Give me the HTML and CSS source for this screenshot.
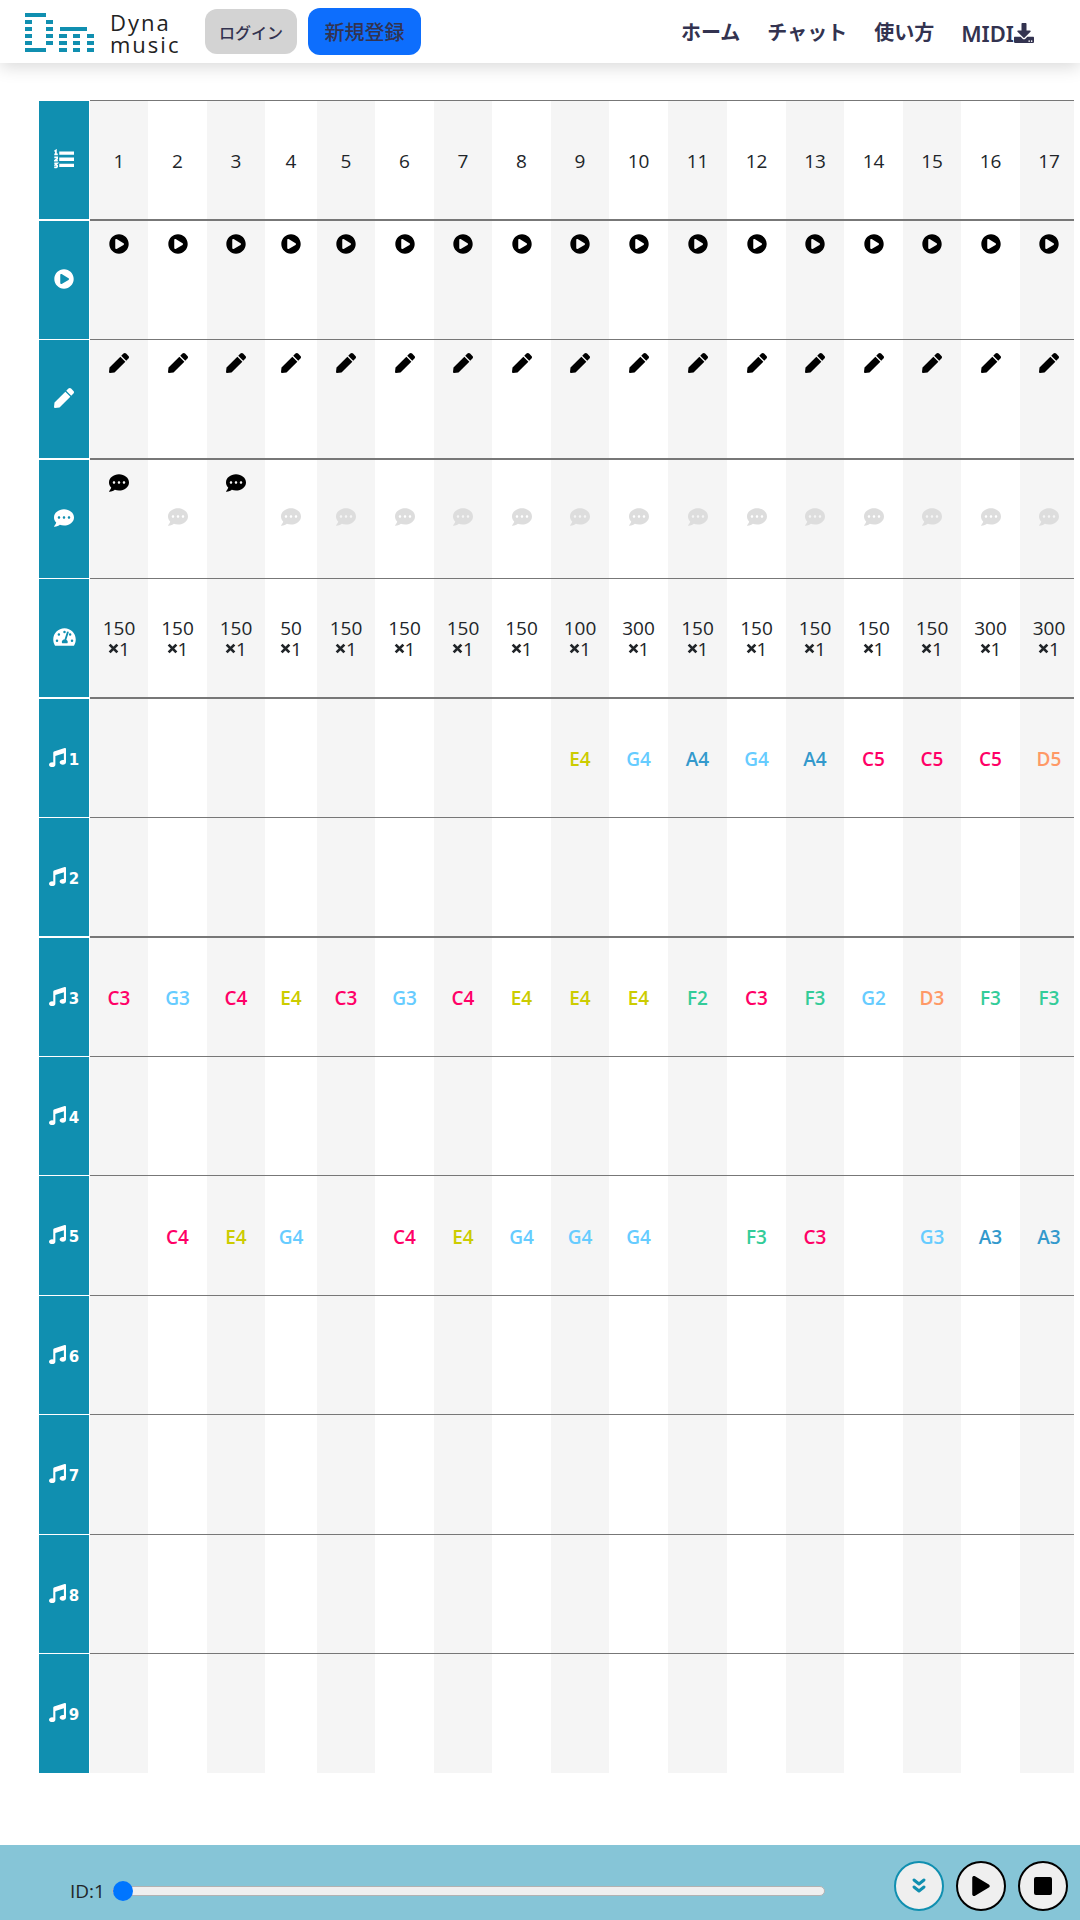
FILE: index.html
```html
<!DOCTYPE html>
<html lang="ja">
<head>
<meta charset="utf-8">
<meta name="viewport" content="width=device-width, initial-scale=1">
<title>Dynamusic</title>
<link rel="stylesheet" href="styles.css">
</head>
<body>
<svg class="sprite" aria-hidden="true">
  <symbol id="play-circle" viewBox="0 0 512 512"><path d="M256 8C119 8 8 119 8 256s111 248 248 248 248-111 248-248S393 8 256 8zm115.7 272l-176 101c-15.8 8.8-35.7-2.5-35.7-21V152c0-18.4 19.8-29.8 35.7-21l176 107c16.4 9.2 16.4 32.9 0 42z"/></symbol>
  <symbol id="pen" viewBox="0 0 512 512"><path d="M290.74 93.24l128.02 128.02-277.99 277.99-114.14 12.6C11.35 513.54-1.56 500.62.14 485.34l12.7-114.22 277.9-277.88zm207.2-19.06l-60.11-60.11c-18.75-18.75-49.16-18.75-67.91 0l-56.55 56.55 128.02 128.02 56.55-56.55c18.75-18.76 18.75-49.16 0-67.91z"/></symbol>
  <symbol id="comment" viewBox="0 0 512 512"><path d="M256 32C114.6 32 0 125.1 0 240c0 49.6 21.4 95 57 130.7C44.5 421.1 2.7 466 2.2 466.5c-2.2 2.3-2.8 5.7-1.5 8.7S4.8 480 8 480c66.3 0 116-31.8 140.6-51.4 32.7 12.3 69 19.4 107.4 19.4 141.4 0 256-93.1 256-208S397.4 32 256 32zM128 272c-17.7 0-32-14.3-32-32s14.3-32 32-32 32 14.3 32 32-14.3 32-32 32zm128 0c-17.7 0-32-14.3-32-32s14.3-32 32-32 32 14.3 32 32-14.3 32-32 32zm128 0c-17.7 0-32-14.3-32-32s14.3-32 32-32 32 14.3 32 32-14.3 32-32 32z"/></symbol>
  <symbol id="music" viewBox="0 0 512 512" preserveAspectRatio="none"><path d="M470.38 1.51L150.41 96A32 32 0 0 0 128 126.51v261.41A139 139 0 0 0 96 384c-53 0-96 28.66-96 64s43 64 96 64 96-28.66 96-64V214.32l256-75v184.61a138.4 138.4 0 0 0-32-3.93c-53 0-96 28.66-96 64s43 64 96 64 96-28.65 96-64V32a32 32 0 0 0-41.62-30.49z"/></symbol>
  <symbol id="list" viewBox="0 0 21 20"><path d="M5.500 2H21v3.500H5.500zM5.500 8.500H21V12H5.500zM5.500 15H21v3.500H5.500z"/><path d="M.500 2l1.500-1v4M.300 5.200H4M.300 8.200h3v1.500L.800 11.800H4M.300 14.500h3L1.500 16.300q2.200 0 1.800 1.500t-3 .800" fill="none" stroke="currentColor" stroke-width="1.800"/></symbol>
  <symbol id="gauge" viewBox="0 0 576 512"><path fill-rule="evenodd" d="M288 32C129 32 0 161 0 320c0 53 14 102 39 145 6 9 16 15 27 15h444c11 0 21-6 27-15 25-43 39-92 39-145C576 161 447 32 288 32zM96 384a32 32 0 1 1 0-64 32 32 0 0 1 0 64zm48-160a32 32 0 1 1 0-64 32 32 0 0 1 0 64zM288 96a32 32 0 1 1 0 64 32 32 0 0 1 0-64zm108 46l-62 185c43 27 45 66 27 89H230c-26-48 6-95 58-96l62-193c9-26 52-12 46 15zm36 82a32 32 0 1 1 0-64 32 32 0 0 1 0 64zm48 160a32 32 0 1 1 0-64 32 32 0 0 1 0 64z"/></symbol>
  <symbol id="download" viewBox="0 0 512 512"><path fill-rule="evenodd" d="M216 0h80c13 0 24 11 24 24v168h88c18 0 27 22 14 34L269 378c-7 7-19 7-26 0L90 226c-13-12-4-34 14-34h88V24c0-13 11-24 24-24zm296 376v112c0 13-11 24-24 24H24c-13 0-24-11-24-24V376c0-13 11-24 24-24h147l49 49c20 20 52 20 72 0l49-49h147c13 0 24 11 24 24zM368 464a20 20 0 1 0 40 0 20 20 0 0 0-40 0zm64 0a20 20 0 1 0 40 0 20 20 0 0 0-40 0z"/></symbol>
  <symbol id="times" viewBox="0 0 10 10"><path d="M1.500 1.500l7 7M8.500 1.500l-7 7" fill="none" stroke="currentColor" stroke-width="2.500"/></symbol>
</svg>

<header class="topbar">
  <a class="brand" href="#" aria-label="Dyna music">
    <svg class="brand-mark" viewBox="0 0 70 40" aria-hidden="true">
      <g fill="#108fb0">
        <path d="M0 0h21v4H0zM0 7h7v4H0zM0 14h7v4H0zM0 21h7v4H0zM0 28h7v4H0zM0 35h21v4H0zM21 7h7v4h-7zM21 14h7v4h-7zM21 21h7v4h-7zM21 28h7v4h-7z"/>
        <path d="M35 14h27v4H35zM34 21h8v4h-8zM34 28h8v4h-8zM34 35h8v4h-8zM48 21h7v4h-7zM48 28h7v4h-7zM48 35h7v4h-7zM62 21h7v4h-7zM62 28h7v4h-7zM62 35h7v4h-7z"/>
      </g>
    </svg>
    <span class="brand-name">Dyna<br>music</span>
  </a>
  <button class="btn btn-login" type="button">ログイン</button>
  <button class="btn btn-signup" type="button">新規登録</button>
  <nav class="menu">
    <a href="#">ホーム</a>
    <a href="#">チャット</a>
    <a href="#">使い方</a>
    <a class="menu-midi" href="#">MIDI<svg class="icon" aria-hidden="true"><use href="#download"/></svg></a>
  </nav>
</header>

<main class="score">
  <table class="grid">
    <colgroup id="columns"><col class="col-label"></colgroup>
    <tbody id="rows"></tbody>
  </table>
</main>

<footer class="player">
  <label class="position-label" for="position">ID:1</label>
  <input class="position" id="position" type="range" min="1" max="100" value="1">
  <div class="controls">
    <button class="round round-accent" type="button" aria-label="Scroll">
      <svg viewBox="0 0 16 18" width="16" height="18"><path d="M3 3l5 4 5-4M3 10l5 4 5-4" fill="none" stroke="currentColor" stroke-width="3" stroke-linecap="round" stroke-linejoin="round"/></svg>
    </button>
    <button class="round" type="button" aria-label="Play">
      <svg viewBox="0 0 448 512" width="18" height="20"><path d="M424.400 214.700L72.400 6.600C43.800-10.300 0 6.100 0 47.900V464c0 37.500 40.700 60.100 72.400 41.300l352-208c31.400-18.500 31.500-64.100 0-82.600z"/></svg>
    </button>
    <button class="round" type="button" aria-label="Stop">
      <svg viewBox="0 0 18 18" width="18" height="18"><rect width="18" height="18" rx="2"/></svg>
    </button>
  </div>
</footer>
<script src="score.js"></script>
</body>
</html>
```
FILE: styles.css
```css
* { box-sizing: border-box; }

body {
  margin: 0;
  min-height: 100vh;
  display: flex;
  flex-direction: column;
  background: #fff;
  color: #212529;
  font-family: "Open Sans", "Noto Sans CJK JP", sans-serif;
  font-size: 19px;
  line-height: 20px;
}

button { font-family: inherit; padding: 0; cursor: pointer; }

.sprite { display: none; }
.icon { width: 20px; height: 20px; fill: currentColor; }

/* Top bar */
.topbar {
  display: flex;
  align-items: center;
  height: 63px;
  padding: 0 46px 0 25px;
  background: #fff;
  box-shadow: 0 4px 16px rgba(0, 0, 0, .15);
}
.brand {
  display: flex;
  align-items: center;
  gap: 15px;
  width: 180px;
  padding-top: 2px;
  color: #222;
  text-decoration: none;
}
.brand-mark { width: 70px; height: 40px; }
.brand-name {
  font-family: "Open Sans", sans-serif;
  font-size: 22px;
  line-height: 22px;
  letter-spacing: 2px;
}
.btn {
  border: 0;
  border-radius: 12px;
  color: #333350;
  font-size: 20px;
  font-weight: 500;
}
.btn-login { width: 92px; height: 45px; background: #d3d3d3; font-size: 16px; }
.btn-signup { width: 113px; height: 47px; margin-left: 11px; background: #0d6efd; }
.menu { display: flex; gap: 27px; margin-left: auto; padding-top: 2px; }
.menu a {
  display: flex;
  align-items: center;
  color: #333350;
  font-family: "Noto Sans", "Noto Sans CJK JP", sans-serif;
  font-size: 20px;
  font-weight: 600;
  text-decoration: none;
}
.menu .menu-midi { font-size: 22px; }

/* Score grid */
.score {
  flex: 1;
  margin: 37px 6px 72px 39px;
  overflow-x: auto;
  overflow-y: hidden;
  scrollbar-width: none;
}
.grid { width: 1039px; table-layout: fixed; border-collapse: separate; border-spacing: 0; }
.col-label { width: 51px; }
.col-odd { width: 58px; }
.col-even { width: 59px; }
.col-narrow { width: 52px; }

.grid th, .grid td { padding: 0; height: 119px; text-align: center; vertical-align: middle; }
.grid tr:nth-child(even) > * { height: 120px; }
.grid td { padding-top: 2px; border-top: 1px solid #777; }
.grid td:nth-child(even) { background: #f5f5f5; }
.grid th {
  padding-bottom: 2px;
  border-top: 1px solid #fff;
  border-right: 1px solid #fff;
  background: #108fb0;
  background-clip: padding-box;
  color: #fff;
}
.grid tr.thick > * { border-top-width: 2px; }
.grid td.top { padding-top: 13px; vertical-align: top; }
.grid td.off { padding: 0 0 4px; }
.grid td .icon { display: block; margin: 0 auto; color: #000; }
.grid td.off .icon { color: #ddd; }
.grid th .icon { display: block; margin: 0 auto; }
.grid .gauge { width: 23px; }

.cell-button { display: block; margin: 0 auto; border: 0; background: none; }
.tempo { line-height: 21px; }
.grid .tempo .icon { display: inline-block; width: 11px; height: 11px; margin: 0 0 2px; color: #212529; }

.track { display: flex; align-items: flex-end; justify-content: center; gap: 3px; }
.grid .track .icon { width: 17px; height: 19px; margin: 0; }
.track span { font: 700 15px/14px "DejaVu Sans", sans-serif; }

.grid td.note { font-weight: 600; }
.c { color: #ff0066; }
.d { color: #ff9966; }
.e { color: #cccc00; }
.f { color: #33cc99; }
.g { color: #66ccff; }
.a { color: #3399cc; }

/* Player */
.player {
  display: flex;
  align-items: center;
  height: 75px;
  padding: 7px 12px 0 70px;
  background: #86c5d7;
}
.position-label { width: 42px; padding-top: 10px; }
.position {
  flex: 1;
  height: 20px;
  margin: 9px 69px 0 0;
  appearance: none;
  background: none;
}
.position::-webkit-slider-runnable-track {
  height: 10px;
  border: 1px solid #b2b2b2;
  border-radius: 5px;
  background: #efefef;
}
.position::-webkit-slider-thumb {
  appearance: none;
  width: 20px;
  height: 20px;
  margin-top: -6px;
  border-radius: 50%;
  background: #0075ff;
}
.controls { display: flex; gap: 12px; }
.round {
  display: flex;
  align-items: center;
  justify-content: center;
  width: 50px;
  height: 50px;
  border: 2px solid #000;
  border-radius: 50%;
  background: #efefef;
  color: #000;
}
.round-accent { border-color: #108fb0; color: #108fb0; }
```
FILE: score.js
```js
const COUNT = 17;
const tempo = [150, 150, 150, 50, 150, 150, 150, 150, 100, 300, 150, 150, 150, 150, 150, 300, 300];
const comments = [1, 3];
const tracks = {
  1: ",,,,,,,,E4,G4,A4,G4,A4,C5,C5,C5,D5",
  3: "C3,G3,C4,E4,C3,G3,C4,E4,E4,E4,F2,C3,F3,G2,D3,F3,F3",
  5: ",C4,E4,G4,,C4,E4,G4,G4,G4,,F3,C3,,G3,A3,A3"
};
const thickRows = [2, 4, 6, 8];
const wideColumns = [2, 6, 8, 10, 11, 12, 14, 16];

const icon = (name) => `<svg class="icon ${name}" aria-hidden="true"><use href="#${name}"/></svg>`;
const button = (name, label) => `<button class="cell-button" type="button" aria-label="${label}">${icon(name)}</button>`;
const ids = Array.from({ length: COUNT }, (_, i) => i + 1);
const rows = [];

function addRow(head, cell) {
  const thick = thickRows.includes(rows.length + 1) ? ' class="thick"' : "";
  rows.push(`<tr${thick}><th scope="row">${head}</th>${ids.map(cell).join("")}</tr>`);
}

addRow(icon("list"), (id) => `<td>${id}</td>`);
addRow(icon("play-circle"), (id) => `<td class="top">${button("play-circle", "Play " + id)}</td>`);
addRow(icon("pen"), (id) => `<td class="top">${button("pen", "Edit " + id)}</td>`);
addRow(icon("comment"), (id) => `<td class="${comments.includes(id) ? "top" : "off"}">${button("comment", "Comment " + id)}</td>`);
addRow(icon("gauge"), (id) => `<td class="tempo">${tempo[id - 1]}<br>${icon("times")}1</td>`);
for (let t = 1; t <= 9; t++) {
  const notes = (tracks[t] || "").split(",");
  addRow(`<div class="track">${icon("music")}<span>${t}</span></div>`, (id) => {
    const note = notes[id - 1] || "";
    return note ? `<td class="note ${note[0].toLowerCase()}">${note}</td>` : "<td></td>";
  });
}

document.getElementById("columns").insertAdjacentHTML("beforeend",
  ids.map((id) => `<col class="${id === 4 ? "col-narrow" : wideColumns.includes(id) ? "col-even" : "col-odd"}">`).join(""));
document.getElementById("rows").innerHTML = rows.join("");
```
